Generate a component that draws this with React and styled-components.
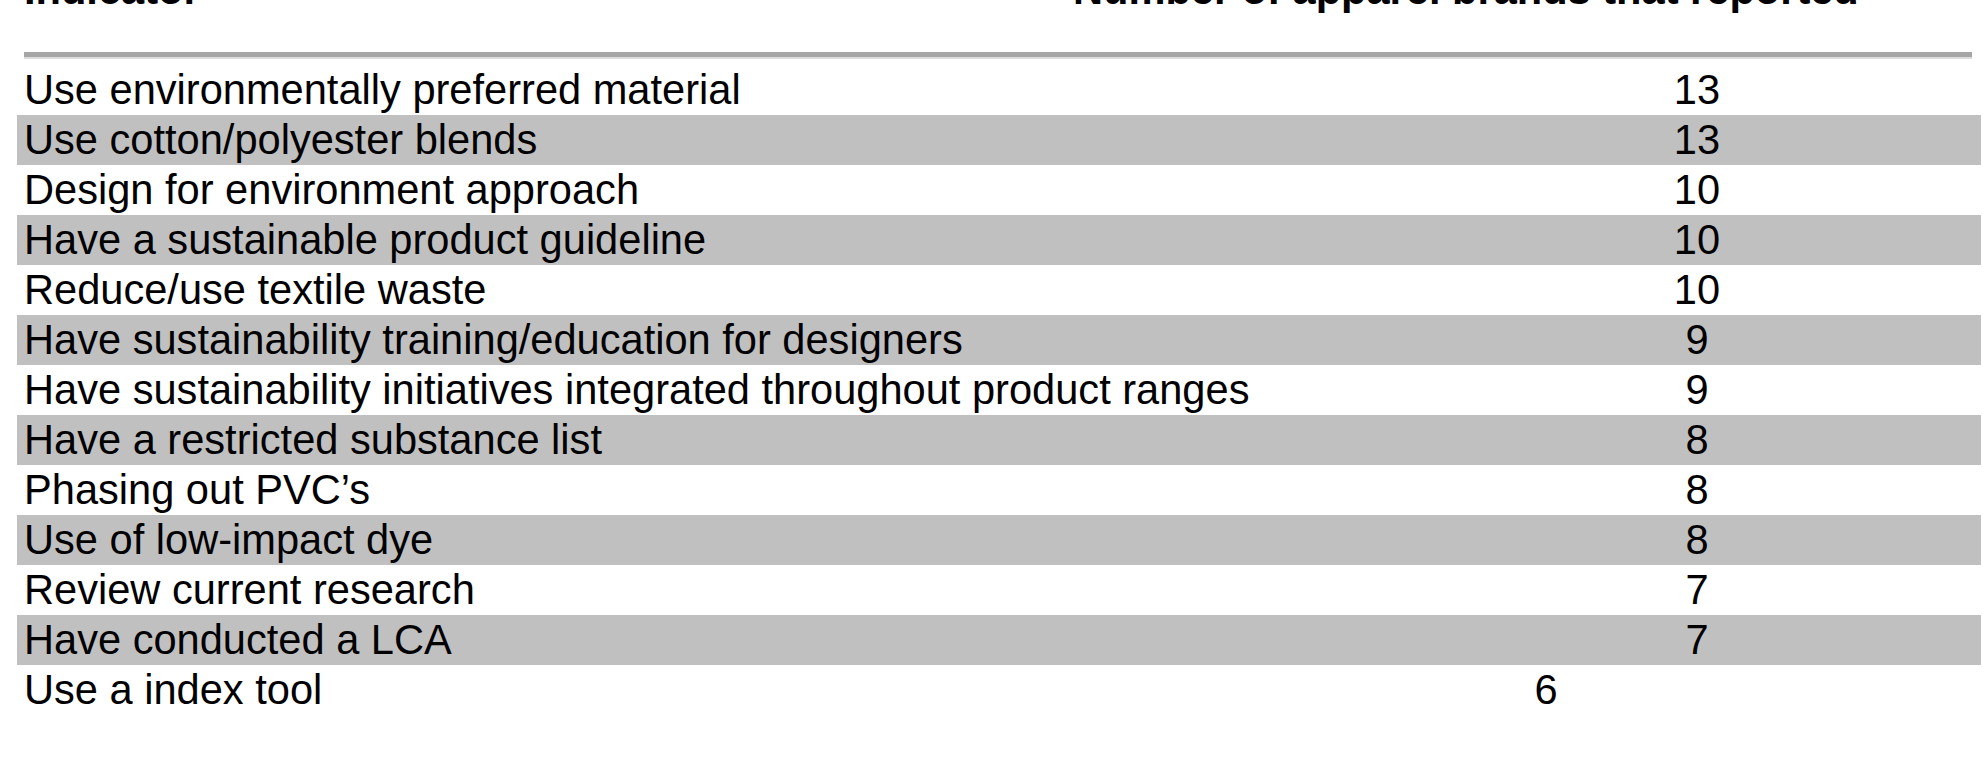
import React from 'react';
import styled, { createGlobalStyle } from 'styled-components';

const GlobalStyle = createGlobalStyle`
  html, body {
    margin: 0;
    padding: 0;
    background: #fff;
  }
  body {
    font-family: 'Liberation Sans', Arial, sans-serif;
    color: #000;
    overflow: hidden;
  }
`;

const rows = [
  { label: 'Use environmentally preferred material', count: 13 },
  { label: 'Use cotton/polyester blends', count: 13 },
  { label: 'Design for environment approach', count: 10 },
  { label: 'Have a sustainable product guideline', count: 10 },
  { label: 'Reduce/use textile waste', count: 10 },
  { label: 'Have sustainability training/education for designers', count: 9 },
  { label: 'Have sustainability initiatives integrated throughout product ranges', count: 9 },
  { label: 'Have a restricted substance list', count: 8 },
  { label: 'Phasing out PVC’s', count: 8 },
  { label: 'Use of low-impact dye', count: 8 },
  { label: 'Review current research', count: 7 },
  { label: 'Have conducted a LCA', count: 7 },
  { label: 'Use a index tool', count: 6, offset: 302 },
];

export default function App() {
  return (
    <>
      <GlobalStyle />
      <Table>
        <HeaderRow>
          <HeaderCell>Indicator</HeaderCell>
          <HeaderCell>Number of apparel brands that reported</HeaderCell>
        </HeaderRow>
        <Rule />
        <Body>
          {rows.map((row, i) => (
            <Row key={row.label} $shaded={i % 2 === 1}>
              <Label>{row.label}</Label>
              <Count $offset={row.offset || 0}>{row.count}</Count>
            </Row>
          ))}
        </Body>
      </Table>
    </>
  );
}

const Table = styled.div`
  width: 1964px;
  margin: -35px 0 0 17px;
  font-size: 41.6px;
  line-height: 50px;
`;

const HeaderRow = styled.div`
  display: grid;
  grid-template-columns: 1053px 1fr;
  height: 50px;
`;

const HeaderCell = styled.div`
  font-weight: 700;
  padding-left: 7px;
  white-space: nowrap;

  &:last-child {
    padding-left: 3px;
  }
`;

const Rule = styled.div`
  margin: 37px 9px 0 7px;
  height: 5px;
  background: #a6a6a6;
  border-bottom: 2px solid #dcdcdc;
`;

const Body = styled.div`
  display: flex;
  flex-direction: column;
  margin-top: 6px;
`;

const Row = styled.div`
  display: grid;
  grid-template-columns: 1396px 568px;
  height: 50px;
  background: ${({ $shaded }) => ($shaded ? '#c0c0c0' : 'transparent')};
`;

const Label = styled.div`
  padding-left: 7px;
  white-space: nowrap;
`;

const Count = styled.div`
  text-align: center;
  padding-right: ${({ $offset }) => $offset}px;
`;
